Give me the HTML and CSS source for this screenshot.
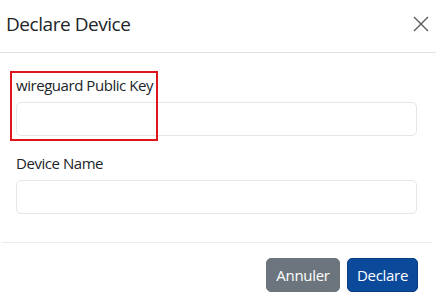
FILE: index.html
```html
<!DOCTYPE html>
<html lang="en">
<head>
<meta charset="utf-8">
<title>Declare Device</title>
<link rel="stylesheet" href="styles.css">
</head>
<body>
<div class="modal">
  <div class="modal-header">
    <h5 class="modal-title">Declare Device</h5>
    <button class="btn-close" aria-label="Close">
      <svg width="16" height="16" viewBox="0 0 16 16"><path d="M1 1 L15 15 M15 1 L1 15" stroke="#5a5a5a" stroke-width="1.4" fill="none"/></svg>
    </button>
  </div>
  <div class="modal-body">
    <div class="field field-key">
      <label class="form-label">wireguard Public Key</label>
      <input class="form-control" type="text">
      <div class="highlight"></div>
    </div>
    <div class="field">
      <label class="form-label">Device Name</label>
      <input class="form-control" type="text">
    </div>
  </div>
  <div class="modal-footer">
    <button class="btn btn-secondary">Annuler</button>
    <button class="btn btn-primary">Declare</button>
  </div>
</div>
</body>
</html>
```

FILE: styles.css
```css
* { box-sizing: border-box; }
html, body { margin: 0; padding: 0; background: #fff; }
body {
  font-family: "Open Sans", "Noto Sans", sans-serif;
  color: #212529;
  width: 436px;
  height: 302px;
  overflow: hidden;
}
.modal { display: flex; flex-direction: column; }
.modal-header {
  height: 53px;
  display: flex;
  align-items: center;
  justify-content: space-between;
  padding: 0 7px 0 6px;
  border-bottom: 1px solid #dee2e6;
}
.modal-title {
  margin: 0;
  font-size: 19px;
  font-weight: 400;
  letter-spacing: -0.45px;
  position: relative;
  top: -2px;
}
.btn-close {
  border: 0;
  background: transparent;
  padding: 0;
  width: 16px;
  height: 16px;
  position: relative;
  top: -2px;
}
.btn-close svg { display: block; }
.modal-body {
  padding: 20px 19px 0 16px;
  display: flex;
  flex-direction: column;
  gap: 15px;
}
.field { display: flex; flex-direction: column; position: relative; }
.form-label {
  font-size: 15px;
  line-height: 24px;
  margin-bottom: 5px;
  letter-spacing: -0.45px;
}
.form-control {
  height: 34px;
  border: 1px solid #e3e6ea;
  border-radius: 5px;
  padding: 6px 12px;
  font: inherit;
  background: #fff;
}
.highlight {
  position: absolute;
  left: -6px;
  top: -2px;
  width: 148px;
  height: 70px;
  border: 2px solid #e0151b;
  pointer-events: none;
}
.modal-footer {
  margin: 28px 4px 0 2px;
  border-top: 1px solid #e9ecef;
  padding: 15px 14px 0 0;
  display: flex;
  justify-content: flex-end;
  gap: 7px;
}
.btn {
  height: 34px;
  border-radius: 5px;
  font-family: inherit;
  font-size: 15px;
  letter-spacing: -0.3px;
  color: #fff;
  padding: 0 6px;
  border: 1px solid transparent;
}
.btn-secondary { background: #6c757d; border-color: #6c757d; width: 74px; }
.btn-primary { background: #0b4a9b; border-color: #083d84; width: 71px; }
```
